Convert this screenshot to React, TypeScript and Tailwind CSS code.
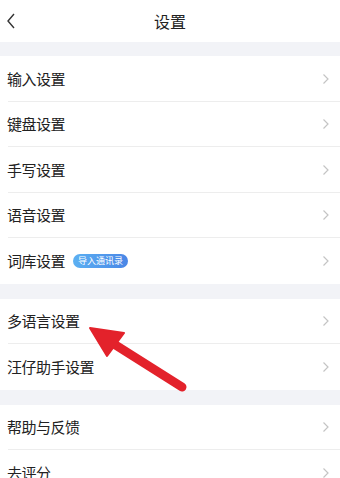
import React from "react";

function Chevron() {
  return (
    <svg width="8" height="12" viewBox="0 0 8 12" className="shrink-0">
      <path d="M1.5 1.5 L6 6 L1.5 10.5" fill="none" stroke="#c4c4c4" strokeWidth="1.2" />
    </svg>
  );
}

function Row({ label, badge, last }: { label: string; badge?: string; last?: boolean }) {
  return (
    <div className="relative h-[45.5px] flex items-center pl-[7px] pr-[10px] bg-white">
      <span className="text-[15px] text-[#222] tracking-[-0.5px]">{label}</span>
      {badge && (
        <span className="ml-[8px] h-[14px] px-[5px] rounded-full bg-gradient-to-r from-[#5cb0f2] to-[#4a86e6] text-white text-[9px] leading-[14px]">
          {badge}
        </span>
      )}
      <div className="flex-1" />
      <Chevron />
      {!last && <div className="absolute left-[8px] right-0 bottom-0 h-px bg-[#ededed]" />}
    </div>
  );
}

function Gap() {
  return <div className="h-[15px] bg-[#f2f3f7]" />;
}

export default function App() {
  return (
    <div
      className="relative w-[340px] h-[478px] overflow-hidden bg-white"
      style={{ fontFamily: '"Noto Sans CJK SC", "Noto Sans", sans-serif' }}
    >
      <div className="h-[42px] flex items-center justify-center relative bg-white">
        <svg width="10" height="16" viewBox="0 0 10 16" className="absolute left-[6px] top-[13px]">
          <path d="M8 1 L2 8 L8 15" fill="none" stroke="#333" strokeWidth="1.4" />
        </svg>
        <span className="text-[16px] text-[#222]">设置</span>
      </div>
      <div className="h-[14px] bg-[#f2f3f7]" />
      <Row label="输入设置" />
      <Row label="键盘设置" />
      <Row label="手写设置" />
      <Row label="语音设置" />
      <Row label="词库设置" badge="导入通讯录" last />
      <Gap />
      <Row label="多语言设置" />
      <Row label="汪仔助手设置" last />
      <Gap />
      <Row label="帮助与反馈" />
      <Row label="去评分" last />
      <svg className="absolute left-0 top-0 pointer-events-none" width="340" height="478" viewBox="0 0 340 478">
        <line x1="182" y1="387" x2="106" y2="339" stroke="#e3222b" strokeWidth="9" strokeLinecap="round" />
        <polygon points="90,328 124,333 107,356" fill="#e3222b" stroke="#e3222b" strokeWidth="2" strokeLinejoin="round" />
      </svg>
    </div>
  );
}
